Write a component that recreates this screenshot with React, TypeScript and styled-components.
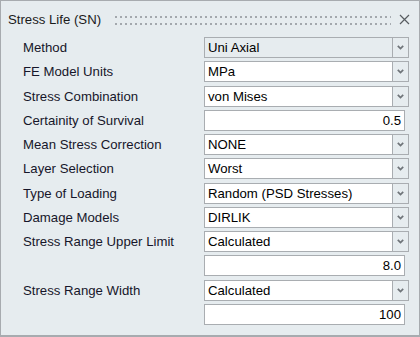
import React from "react";
import styled, { createGlobalStyle } from "styled-components";

const GlobalStyle = createGlobalStyle`
  html, body {
    margin: 0;
    padding: 0;
    background: #e6ecef;
  }
  * {
    box-sizing: border-box;
  }
`;

type Row = {
  label?: string;
  value: string;
  kind: "select" | "input";
  disabled?: boolean;
};

const rows: Row[] = [
  { label: "Method", value: "Uni Axial", kind: "select", disabled: true },
  { label: "FE Model Units", value: "MPa", kind: "select" },
  { label: "Stress Combination", value: "von Mises", kind: "select" },
  { label: "Certainity of Survival", value: "0.5", kind: "input" },
  { label: "Mean Stress Correction", value: "NONE", kind: "select" },
  { label: "Layer Selection", value: "Worst", kind: "select" },
  { label: "Type of Loading", value: "Random (PSD Stresses)", kind: "select" },
  { label: "Damage Models", value: "DIRLIK", kind: "select" },
  { label: "Stress Range Upper Limit", value: "Calculated", kind: "select" },
  { value: "8.0", kind: "input" },
  { label: "Stress Range Width", value: "Calculated", kind: "select" },
  { value: "100", kind: "input" },
];

const Chevron: React.FC = () => (
  <svg width="7" height="5" viewBox="0 0 7 5">
    <path d="M0.8 0.8 L3.5 3.6 L6.2 0.8" fill="none" stroke="#6f7479" strokeWidth="1.7" />
  </svg>
);

const GripDots: React.FC = () => (
  <svg width="100%" height="12">
    <defs>
      <pattern id="grip" width="5" height="7" patternUnits="userSpaceOnUse">
        <rect x="0" y="3" width="2" height="2" fill="#a3a8ad" />
      </pattern>
    </defs>
    <rect x="0" y="0" width="100%" height="12" fill="url(#grip)" />
  </svg>
);

const App: React.FC = () => {
  return (
    <>
      <GlobalStyle />
      <Panel>
        <TitleBar>
          <Title>Stress Life (SN)</Title>
          <Grip>
            <GripDots />
          </Grip>
          <Close>
            <svg width="11" height="11" viewBox="0 0 11 11">
              <path d="M1 1 L10 10 M10 1 L1 10" stroke="#585d61" strokeWidth="1.2" />
            </svg>
          </Close>
        </TitleBar>
        <Form>
          {rows.map((r, i) => (
            <React.Fragment key={i}>
              <Label>{r.label ?? ""}</Label>
              {r.kind === "select" ? (
                <Select $disabled={r.disabled}>
                  <SelectText>{r.value}</SelectText>
                  <ArrowBox>
                    <Chevron />
                  </ArrowBox>
                </Select>
              ) : (
                <Input>{r.value}</Input>
              )}
            </React.Fragment>
          ))}
        </Form>
      </Panel>
    </>
  );
};

const Panel = styled.div`
  width: 420px;
  height: 337px;
  border: 1px solid #a7abaf;
  border-bottom-width: 2px;
  background: #e6ecef;
  font-family: "Liberation Sans", Arial, sans-serif;
  font-size: 13.2px;
  color: #111;
  overflow: hidden;
`;

const TitleBar = styled.div`
  display: flex;
  align-items: center;
  height: 36px;
  padding: 0 9px 0 7px;
`;

const Title = styled.div`
  color: #1b1b1b;
  white-space: nowrap;
`;

const Grip = styled.div`
  flex: 1;
  display: flex;
  height: 12px;
  margin: 0 7px 0 14px;
`;

const Close = styled.div`
  display: flex;
  align-items: center;
  justify-content: center;
  width: 12px;
  height: 12px;
`;

const Form = styled.div`
  display: grid;
  grid-template-columns: 181px 205px;
  grid-auto-rows: 21px;
  row-gap: 3.25px;
  padding-left: 22px;
`;

const Label = styled.div`
  display: flex;
  align-items: center;
  color: #16162a;
  white-space: nowrap;
`;

const Select = styled.div<{ $disabled?: boolean }>`
  display: flex;
  align-items: stretch;
  border: 1px solid #a9adb1;
  background: ${({ $disabled }) => ($disabled ? "#e6ecef" : "#ffffff")};
`;

const SelectText = styled.div`
  flex: 1;
  display: flex;
  align-items: center;
  padding-left: 3px;
  color: #000;
  white-space: nowrap;
`;

const ArrowBox = styled.div`
  width: 16px;
  display: flex;
  align-items: center;
  justify-content: center;
  border-left: 1px solid #a9adb1;
  background: #e6ecef;
`;

const Input = styled.div`
  width: 201px;
  display: flex;
  align-items: center;
  justify-content: flex-end;
  padding-right: 3px;
  border: 1px solid #a9adb1;
  background: #ffffff;
  color: #000;
`;

export default App;
